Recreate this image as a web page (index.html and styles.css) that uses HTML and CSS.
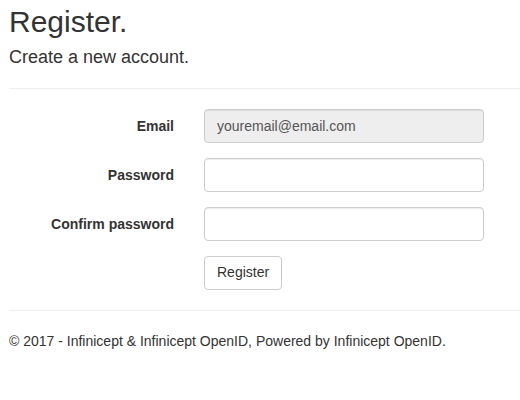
FILE: index.html
```html
<!DOCTYPE html>
<html>
<head>
<meta charset="utf-8">
<link rel="stylesheet" href="styles.css">
</head>
<body>
<div class="container">
  <h2 class="title">Register.</h2>
  <h4 class="subtitle">Create a new account.</h4>
  <hr class="rule">
  <form class="form">
    <div class="form-group">
      <label class="label">Email</label>
      <input class="input input-readonly" type="text" value="youremail@email.com" readonly>
    </div>
    <div class="form-group">
      <label class="label">Password</label>
      <input class="input" type="password">
    </div>
    <div class="form-group">
      <label class="label">Confirm password</label>
      <input class="input" type="password">
    </div>
    <div class="form-group">
      <span class="label"></span>
      <button class="btn" type="button">Register</button>
    </div>
  </form>
  <hr class="rule">
  <footer class="footer">
    <p>&copy; 2017 - Infinicept &amp; Infinicept OpenID, Powered by Infinicept OpenID.</p>
  </footer>
</div>
</body>
</html>
```
FILE: styles.css
```css
html, body {
  margin: 0;
  padding: 0;
  background: #fff;
}
body {
  font-family: "Liberation Sans", Arial, Helvetica, sans-serif;
  font-size: 14px;
  line-height: 1.42857;
  color: #333;
}
.container {
  padding: 5px 0 0 9px;
}
.title {
  font-size: 30px;
  font-weight: 500;
  line-height: 1.1;
  margin: 0 0 10px 0;
}
.subtitle {
  font-size: 18px;
  font-weight: 500;
  line-height: 1.1;
  margin: 10px 0 10px 0;
}
.rule {
  border: 0;
  border-top: 1px solid #eee;
  margin: 20px 0;
  height: 0;
}
.form {
  display: block;
}
.form-group {
  display: flex;
  align-items: flex-start;
  margin-bottom: 15px;
}
.form-group:last-child {
  margin-bottom: 0;
}
.label {
  width: 165px;
  flex: none;
  text-align: right;
  font-weight: bold;
  padding-top: 8px;
  margin-right: 30px;
}
.input {
  box-sizing: border-box;
  width: 280px;
  height: 34px;
  padding: 6px 12px;
  font-family: inherit;
  font-size: 14px;
  line-height: 1.42857;
  color: #555;
  background: #fff;
  border: 1px solid #ccc;
  border-radius: 4px;
  box-shadow: inset 0 1px 1px rgba(0,0,0,.075);
  margin: 0;
}
.input-readonly {
  background: #eee;
}
.btn {
  box-sizing: border-box;
  height: 34px;
  padding: 6px 12px;
  font-family: inherit;
  font-size: 14px;
  line-height: 1.42857;
  color: #333;
  background: #fff;
  border: 1px solid #ccc;
  border-radius: 4px;
  margin: 0;
}
.footer p {
  margin: 0 0 10px 0;
  padding-top: 1px;
}
```
